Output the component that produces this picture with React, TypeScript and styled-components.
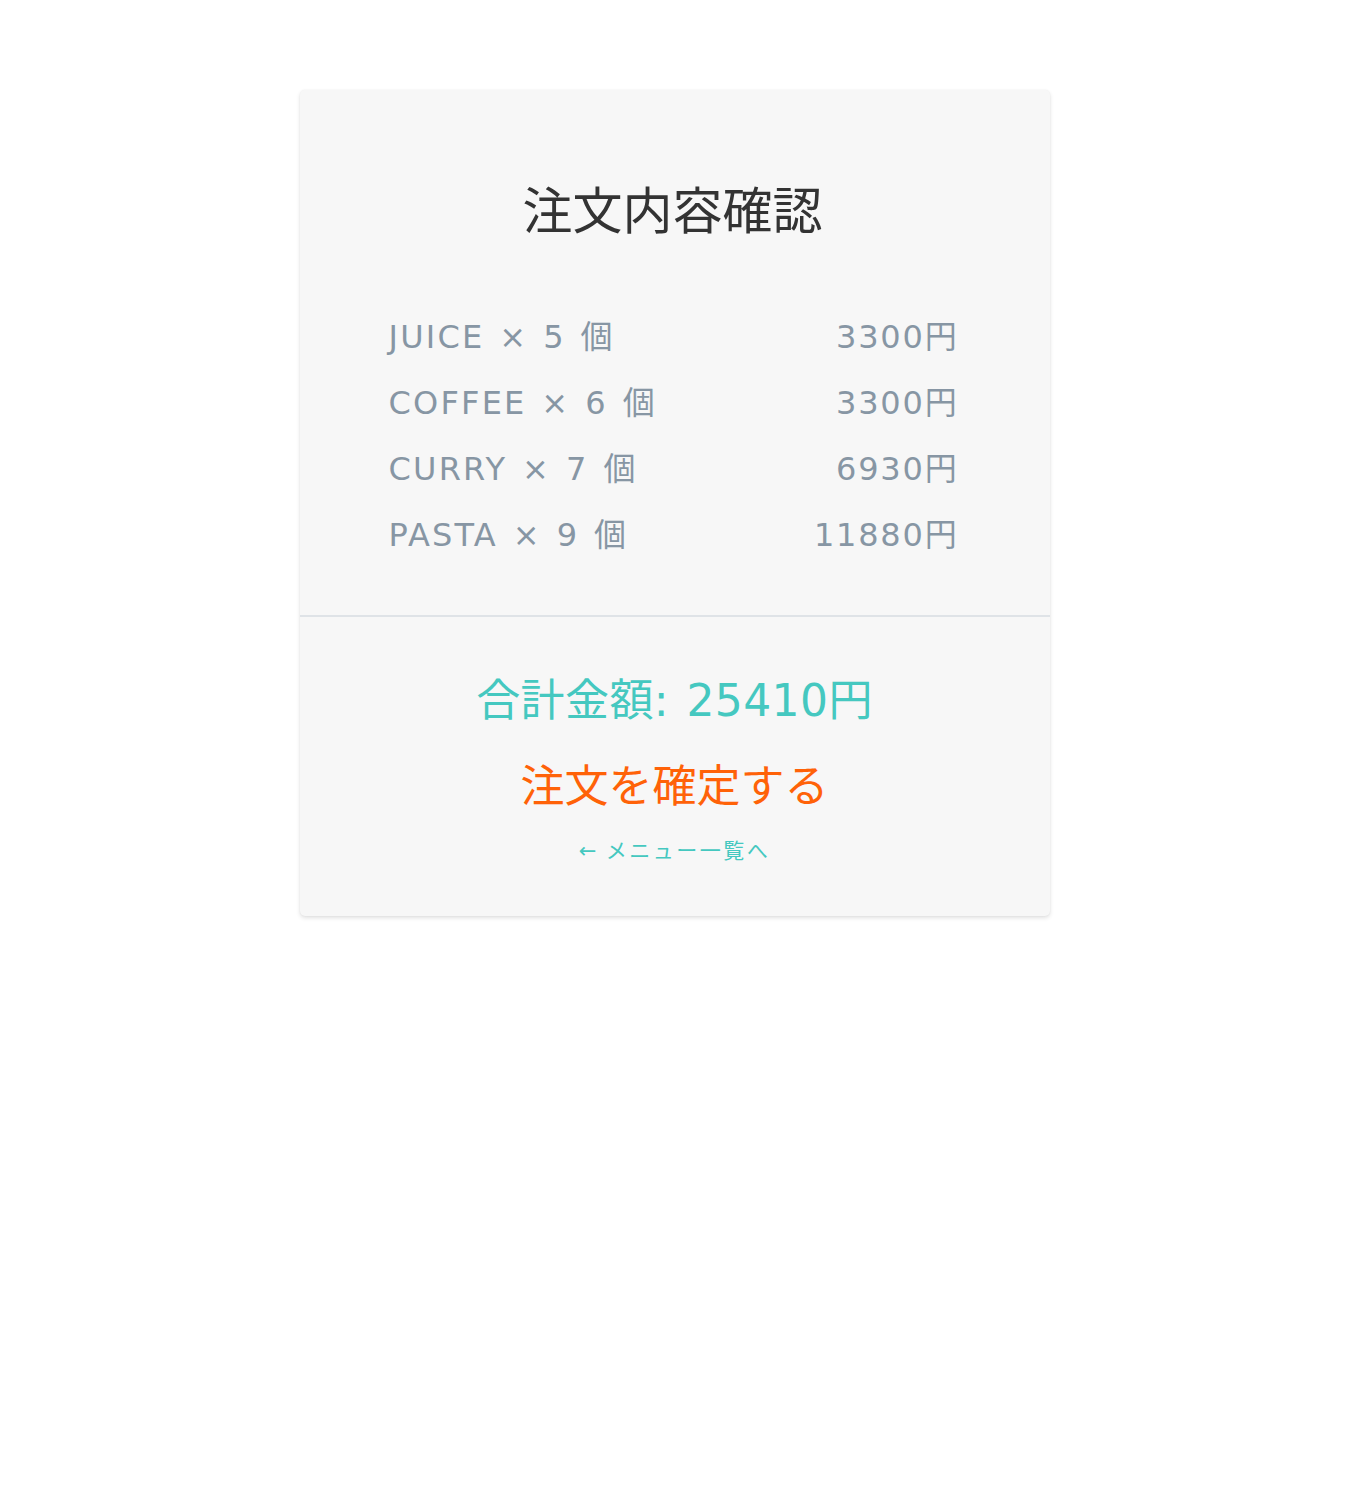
import React from "react";
import styled, { createGlobalStyle } from "styled-components";

const Global = createGlobalStyle`
  html, body { margin: 0; padding: 0; background: #ffffff; }
  body { font-family: "DejaVu Sans", "Noto Sans CJK JP", sans-serif; }
`;

const Page = styled.div`
  display: flex;
  justify-content: center;
  padding-top: 90px;
  padding-bottom: 595px;
`;

const Card = styled.div`
  width: 750px;
  background: #f7f7f7;
  border-radius: 5px;
  box-shadow: 0 2px 4px rgba(0, 0, 0, 0.12), 0 0 2px rgba(0, 0, 0, 0.05);
  display: flex;
  flex-direction: column;
`;

const TopSection = styled.div`
  padding: 81px 93px 50px 89px;
  border-bottom: 2px solid #dfe3e7;
`;

const Title = styled.h1`
  margin: 0 0 58px;
  height: 72px;
  line-height: 72px;
  text-align: center;
  font-family: "Noto Sans CJK JP", sans-serif;
  font-weight: 400;
  font-size: 50px;
  color: #333333;
`;

const List = styled.ul`
  list-style: none;
  margin: 0;
  padding: 0;
`;

const Row = styled.li`
  display: flex;
  justify-content: space-between;
  align-items: center;
  height: 66px;
  font-size: 32px;
  letter-spacing: 2.2px;
  word-spacing: 2.5px;
  color: #8796a4;
`;

const Price = styled.span`
  margin-right: -2px;
  letter-spacing: 1.8px;
`;

const BottomSection = styled.div`
  padding: 51px 0 36px;
  display: flex;
  flex-direction: column;
  align-items: center;
`;

const Total = styled.div`
  height: 66px;
  line-height: 66px;
  font-size: 44px;
  letter-spacing: 0.4px;
  word-spacing: 3px;
  color: #45c8c0;
`;

const ConfirmButton = styled.button`
  border: none;
  background: none;
  padding: 0;
  margin-top: 16px;
  height: 66px;
  line-height: 66px;
  font-family: "Noto Sans CJK JP", sans-serif;
  font-size: 44px;
  color: #ff6208;
  cursor: pointer;
`;

const BackLink = styled.a`
  margin-top: 2px;
  height: 62px;
  line-height: 62px;
  font-size: 21px;
  letter-spacing: 2.5px;
  color: #45c8c0;
  text-decoration: none;
  font-family: "Noto Sans CJK JP", sans-serif;
`;

const Arrow = styled.span`
  font-family: "DejaVu Sans", sans-serif;
  margin-right: 7px;
`;

const items = [
  { name: "JUICE", qty: 5, price: 3300 },
  { name: "COFFEE", qty: 6, price: 3300 },
  { name: "CURRY", qty: 7, price: 6930 },
  { name: "PASTA", qty: 9, price: 11880 },
];

export default function App() {
  const total = items.reduce((s, i) => s + i.price, 0);
  return (
    <>
      <Global />
      <Page>
        <Card>
          <TopSection>
            <Title>注文内容確認</Title>
            <List>
              {items.map((it) => (
                <Row key={it.name}>
                  <span>
                    {it.name} × {it.qty} 個
                  </span>
                  <Price>{it.price}円</Price>
                </Row>
              ))}
            </List>
          </TopSection>
          <BottomSection>
            <Total>合計金額: {total}円</Total>
            <ConfirmButton>注文を確定する</ConfirmButton>
            <BackLink href="#">
              <Arrow>←</Arrow>メニュー一覧へ
            </BackLink>
          </BottomSection>
        </Card>
      </Page>
    </>
  );
}
